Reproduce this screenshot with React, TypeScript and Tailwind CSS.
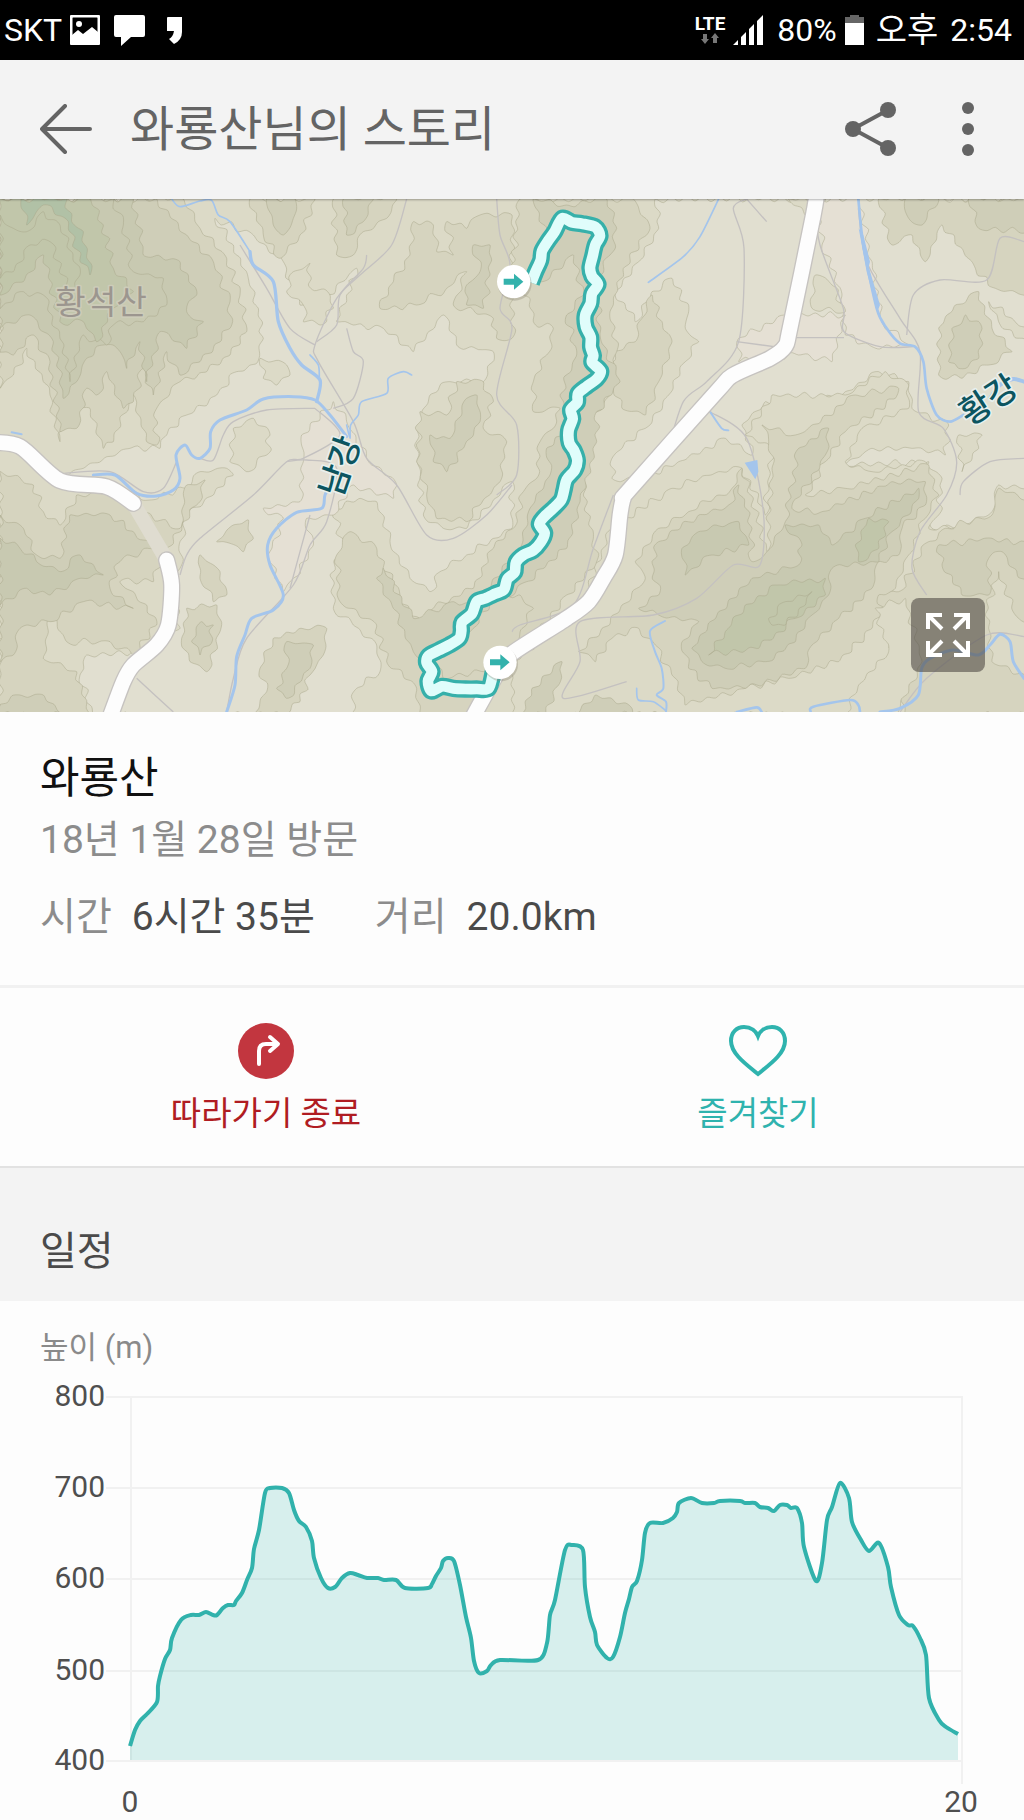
import React from 'react';

type Point = [number, number];

const parse = (s: string): Point[] =>
  s
    .trim()
    .split(/\s+/)
    .map((p) => p.split(',').map(Number) as Point);

/* Catmull-Rom spline through the points. */
function spline(points: Point[], closed = false): string {
  const n = points.length;
  const at = (i: number): Point =>
    closed ? points[(i + n) % n] : points[Math.max(0, Math.min(n - 1, i))];
  let d = `M${points[0][0]},${points[0][1]}`;
  const last = closed ? n : n - 1;
  for (let i = 0; i < last; i++) {
    const [p0, p1, p2, p3] = [at(i - 1), at(i), at(i + 1), at(i + 2)];
    const c = (a: number, b: number, k: number) => (a + (b - k) / 7).toFixed(1);
    d += `C${c(p1[0], p2[0], p0[0])},${c(p1[1], p2[1], p0[1])} ${c(p2[0], p1[0], p3[0])},${c(p2[1], p1[1], p3[1])} ${p2[0]},${p2[1]}`;
  }
  return closed ? d + 'Z' : d;
}

/* Subdivides each edge and pushes the new points sideways, as contour lines run over ridges. */
function ridged(points: Point[], amp: number): Point[] {
  const out: Point[] = [];
  let seed = Math.round(Math.abs(points[0][0] * 31 + points[0][1] * 17)) + 7;
  const rand = () => {
    seed = (seed * 1103515245 + 12345) % 2147483648;
    return seed / 2147483648;
  };
  for (let i = 0; i < points.length; i++) {
    const [ax, ay] = points[i];
    const [bx, by] = points[(i + 1) % points.length];
    const len = Math.hypot(bx - ax, by - ay);
    const steps = Math.max(1, Math.round(len / 24));
    for (let k = 0; k < steps; k++) {
      const t = k / steps;
      const off = k === 0 ? 0 : (k % 2 ? 1 : -1) * amp * (0.2 + rand());
      out.push([
        Math.round(ax + (bx - ax) * t - ((by - ay) / len) * off),
        Math.round(ay + (by - ay) * t + ((bx - ax) / len) * off),
      ]);
    }
  }
  return out;
}

const TONES = {
  low: '#e5e0d4',
  valley: '#e1dfd0',
  base: '#dcdac7',
  hill: '#d6d4bf',
  high: '#cfceb8',
  ridge: '#c8c9b1',
  peak: '#c1c6aa',
  top: '#b1c1a6',
};

type Contour = [keyof typeof TONES, string];

const WEST: Contour[] = [
  ['valley', '645,70 700,150 745,250 775,340 790,430 770,505 710,530 650,600 560,660 500,720 480,760 390,760 250,820 200,850 360,880 450,915 560,880 600,830 680,820 700,840 640,900 560,960 540,1040 540,1120 520,1200 540,1300 500,1340 430,1370 260,1380 240,1440 280,1560 1050,1560 1070,1480 1140,1430 1130,1350 1060,1290 1000,1240 990,1140 1030,1060 1000,940 1080,910 1130,920 1170,1040 1230,1150 1290,1190 1320,1130 1400,1080 1536,1000 1536,860 1500,900 1400,1000 1330,1000 1270,960 1260,850 1250,700 1290,600 1350,560 1450,560 1480,470 1370,450 1330,360 1240,470 1150,400 1060,390 1010,380 1040,300 1070,220 940,340 900,330 880,290 850,200 760,120'],
  ['base', '860,290 880,230 930,205 925,270 990,300 1000,340 960,390 910,380 910,330'],
  ['low', '905,720 1000,620 1040,680 1100,790 1190,870 1180,910 1060,870 1000,960 920,970 940,1050 880,1150 850,1190 805,1080 850,970 790,940 900,920 910,800'],
  ['hill', '0,12 550,12 600,100 680,190 720,300 740,410 690,480 620,530 540,560 470,640 470,750 440,740 400,600 340,740 310,760 270,640 200,650 180,740 150,600 130,560 80,460 40,540 0,580'],
  ['high', '0,12 470,12 560,120 640,200 690,320 690,400 600,500 540,540 500,470 460,600 430,520 400,620 370,640 320,530 290,600 260,580 230,700 180,710 150,500 100,420 40,480 0,470'],
  ['ridge', '0,12 400,12 430,180 540,200 590,300 560,350 610,380 560,460 480,410 440,560 420,440 380,520 360,470 310,450 260,490 230,560 190,610 160,440 90,360 0,400'],
  ['ridge', '0,12 340,12 370,90 400,230 490,250 500,330 430,380 340,390 320,450 250,420 210,560 180,430 130,300 70,290 0,340'],
  ['peak', '0,12 270,12 310,90 340,220 400,290 340,340 290,440 250,380 180,380 130,180 70,260 0,300'],
  ['peak', '0,60 40,100 80,110 130,50 180,90 240,240 220,320 150,140 90,150 40,230 0,250'],
  ['top', '65,12 200,12 215,80 250,110 270,240 240,200 205,80 130,30 80,90'],
  ['hill', '0,830 100,870 130,950 180,990 230,900 330,890 400,940 540,1000 560,870 615,855 590,930 500,1060 460,1160 360,1160 440,1230 470,1290 400,1380 330,1340 200,1340 150,1260 130,1390 230,1430 270,1560 0,1560'],
  ['high', '0,960 70,1000 110,1080 180,1090 210,960 330,960 400,1010 460,1060 360,1100 330,1180 400,1240 250,1220 150,1280 60,1300 40,1380 0,1400'],
  ['ridge', '0,1030 60,1060 110,1100 180,1130 240,1080 310,1140 240,1150 150,1200 80,1180 0,1230'],
  ['high', '0,1530 60,1500 130,1500 190,1560 0,1560'],
  ['base', '700,700 760,670 810,720 800,780 740,830 690,800'],
  ['hill', '650,1040 700,990 745,975 760,1030 730,1070 690,1045'],
  ['base', '780,490 860,510 870,540 830,570 790,550'],
  ['hill', '600,1080 660,1130 680,1200 640,1220 600,1150'],
  ['hill', '560,1240 650,1230 660,1310 620,1430 570,1400 545,1330'],
  ['high', '605,1280 640,1290 630,1350 600,1380 575,1340'],
  ['hill', '820,1330 900,1300 980,1300 970,1380 930,1440 900,1520 850,1560 760,1560 800,1490 780,1420'],
  ['high', '860,1340 940,1350 930,1420 860,1510 830,1480 860,1420'],
  ['hill', '750,12 790,120 840,190 900,120 945,12'],
  ['high', '800,12 820,90 850,120 880,70 885,12'],
  ['hill', '1000,12 1010,180 1060,180 1090,110 1160,70 1190,12'],
  ['high', '1030,12 1040,120 1090,80 1120,12'],
  ['hill', '1240,80 1230,180 1180,260 1140,340 1250,330 1340,280 1400,230 1360,330 1480,370 1490,430 1536,430 1536,60 1440,60 1400,100 1340,80 1360,180 1310,170 1300,90'],
  ['high', '1420,150 1470,150 1470,240 1450,340 1400,330 1400,270 1440,230'],
  ['hill', '1370,560 1450,560 1480,620 1450,700 1520,740 1500,860 1440,930 1400,980 1310,970 1280,900 1250,800 1260,650 1340,660'],
  ['high', '1400,610 1430,600 1440,680 1390,760 1340,830 1300,800 1290,720 1350,730'],
];

const RIDGE: Contour[] = [
  ['hill', '1560,12 1536,240 1590,310 1600,380 1660,400 1640,480 1600,560 1600,650 1680,640 1660,700 1620,740 1610,850 1570,890 1540,1000 1480,1060 1420,1180 1300,1240 1260,1290 1200,1200 1130,1060 1050,1010 1010,1080 1020,1220 1130,1290 1160,1400 1250,1480 1260,1560 1400,1560 1540,1400 1600,1330 1700,1200 1790,1100 1780,1030 1750,900 1760,700 1830,600 1850,470 1830,350 1870,220 1950,100 1900,12'],
  ['high', '1600,12 1700,30 1820,12 1850,100 1830,180 1790,250 1800,420 1860,560 1790,650 1790,740 1740,920 1700,1060 1580,1160 1500,1230 1380,1360 1300,1400 1240,1370 1180,1240 1130,1150 1150,1120 1240,1270 1360,1220 1420,1230 1560,1060 1590,940 1650,840 1640,760 1700,700 1680,600 1730,480 1700,360 1750,300 1720,180 1620,260 1590,220 1640,120'],
  ['hill', '1300,1380 1420,1300 1470,1220 1560,1200 1600,1240 1540,1350 1450,1430 1330,1450'],
];

const EAST: Contour[] = [
  ['valley', '430,12 440,100 380,200 310,290 370,380 420,290 480,250 530,350 520,400 560,440 520,500 470,600 400,700 330,760 300,790 300,850 380,860 500,800 640,730 720,780 690,690 760,620 900,630 1000,590 1100,530 1190,560 1200,640 1310,690 1300,780 1200,760 1080,760 1000,810 1250,800 1260,1000 1350,990 1440,950 1460,870 1550,880 1550,12'],
  ['base', '830,12 940,12 930,60 880,60'],
  ['low', '920,12 1040,12 1080,200 1110,380 1190,450 1080,455 1000,420 990,300 930,150'],
  ['low', '680,430 820,360 1000,360 990,410 960,500 860,480 680,500'],
  ['base', '900,340 1000,350 960,270 910,240'],
  ['base', '780,600 1000,600 1120,530 1190,570 1190,640 1050,700 1000,800 1080,830 1240,800 1290,850 1280,960 1250,1000 1550,1000 1550,1560 0,1560 0,1400 200,1250 300,1000 480,880 620,830 690,820 760,960 780,760 700,720'],
  ['hill', '390,370 420,300 450,380 480,440 440,560 400,660 330,640 290,560 310,470 370,440'],
  ['hill', '750,690 850,720 900,690 1030,600 1160,580 1150,610 1000,710 940,800 880,900 1000,880 1250,810 1280,900 1240,970 1190,1080 1150,1180 1080,1300 980,1400 830,1450 700,1480 520,1530 480,1440 430,1350 380,1300 300,1330 250,1400 200,1370 270,1300 330,1230 400,1150 370,1100 440,1000 530,950 660,880 690,820 765,1070 780,820 770,740'],
  ['high', '860,760 950,700 940,780 840,940 930,950 1140,860 1240,860 1240,930 1170,1000 1160,1080 1100,1100 1080,1180 980,1270 900,1350 880,1420 700,1480 600,1480 530,1420 510,1340 560,1280 440,1260 380,1240 440,1200 420,1100 440,1040 560,960 650,930 680,870 720,1000 720,1100 765,1070 820,980'],
  ['ridge', '820,990 920,990 960,1050 1060,970 1220,880 1220,910 1140,1010 1100,1100 960,1120 950,1200 900,1260 850,1340 760,1400 640,1420 570,1400 540,1360 620,1250 720,1150 860,1110 870,1050'],
  ['ridge', '520,1140 510,1060 560,1010 680,980 710,1050 600,1080'],
  ['peak', '1030,1050 1070,970 1130,980 1100,1060 1040,1100'],
  ['peak', '590,1380 640,1310 700,1230 800,1170 940,1150 940,1200 850,1270 740,1360'],
  ['peak', '780,1290 770,1270 820,1220 900,1190 880,1230 820,1290'],
  ['hill', '1100,12 1140,150 1200,120 1240,200 1290,90 1350,160 1390,220 1450,280 1550,300 1550,12'],
  ['high', '1180,12 1190,70 1230,90 1280,12'],
  ['high', '1370,12 1400,100 1550,110 1550,12'],
  ['hill', '1280,400 1330,330 1400,290 1440,400 1500,470 1430,510 1350,550 1280,540'],
  ['high', '1310,500 1320,400 1360,360 1410,400 1400,490 1340,520'],
  ['base', '1430,320 1500,370 1550,400 1550,450 1460,380'],
  ['base', '1340,720 1410,720 1400,760 1350,830'],
  ['hill', '1250,1040 1300,1000 1440,960 1460,880 1550,920 1550,1560 1180,1560 1150,1400 1100,1200 1160,1190'],
  ['high', '1280,1050 1440,1030 1550,1050 1550,1180 1470,1070 1430,1090 1430,1200 1350,1200 1290,1110'],
  ['base', '1460,1130 1510,1260 1550,1290 1550,1450 1440,1400 1430,1300 1420,1260'],
  ['base', '1090,1240 1180,1210 1230,1400 1150,1560 1000,1560 1040,1470 1130,1370'],
  ['high', '30,1560 60,1480 150,1400 140,1470 100,1560'],
  ['high', '180,1560 250,1500 360,1540 360,1560'],
];

const TRACKS = [
  '1220,12 1175,150 1080,240 1010,310 945,450 955,500 1060,680 1100,790 1190,870 1280,1020 1360,1030 1460,960 1536,870',
  '720,150 800,280 870,400 945,450',
  '1100,180 1090,220 1020,300 1010,390 950,440',
  '1040,400 1060,470 1090,500 1060,610 1000,640',
  '945,640 800,645 700,680 670,720 640,795 600,790',
  '945,640 1020,720 910,790 860,800 760,900 600,1030 560,1080 540,1140',
  '860,800 920,795 1010,820 980,980 930,1050 880,1170 740,1330 700,1450 680,1551',
  '930,960 870,1180',
  '190,835 330,830 430,890 490,880 530,800',
  '410,1450 520,1551',
  '1490,12 1500,120 1530,210 1500,340 1536,400 1490,600 1550,690 1550,840 1490,900',
  '2240,12 2200,40 2232,160 2216,440 2120,560 2050,620 1990,780 1880,860',
  '2210,440 2360,460', '2380,428 2532,428',
  '2440,12 2460,150 2530,340 2532,410 2640,455 2740,455',
  '2575,40 2600,200 2700,370 2760,470 2756,650 2830,700 2870,800 2840,900 2760,1010 2736,1120 2780,1200',
  '2720,420 2740,300 2820,255 2960,255 3000,130 3072,140',
  '2130,650 2240,730 2290,950 2280,1110 2200,1110 2090,1210 1960,1260 1740,1280 1740,1400 1690,1510 1880,1460',
  '2240,12 2300,80', '1840,900 1780,1060 1720,1230 1560,1290 1536,1310',
  '2880,900 2890,860 2970,800 3072,790', '2700,1551 2780,1450 2960,1320 3072,1325',
];

const STREAMS: [number, string][] = [
  [5, '515,12 540,35 600,18 635,16 655,60 690,80 750,170'],
  [10, '750,170 760,210 820,260 835,380 870,460 905,510 960,555 950,620'],
  [5, '930,480 955,510 958,550'],
  [9, '1040,725 990,660 945,615 880,605 790,612 740,645 660,675 632,710 630,760 600,790 575,780 555,750 528,780 540,850 520,885 470,903 410,895 345,840 280,840'],
  [5, '1040,690 1050,730 1052,690 1075,660 1085,620 1160,595 1165,550 1210,530 1235,540'],
  [9, '1000,850 975,900 965,940 890,952 830,1000 803,1050 810,1110 850,1200 820,1245 755,1270 735,1320 710,1385 705,1470 680,1551'],
  [5, '2156,12 2100,125 2050,185 1945,262'],
  [8, '2575,12 2590,150 2630,340 2660,400 2700,445 2745,455 2770,500 2780,580 2810,660 2850,680 2890,660'],
  [12, '3072,560 3040,552 3000,570 2970,610'],
  [6, '2130,650 2165,700 2185,706'],
  [6, '1995,1278 1950,1308 1965,1370 1985,1420 1990,1480 1970,1500 1998,1520 1998,1551'],
  [5, '1910,1480 1915,1515 1960,1520 1995,1545'],
  [9, '2640,1551 2700,1540 2755,1500 2765,1420 2790,1390 2860,1365 2935,1380 2970,1350 3000,1318 3030,1340 3040,1400 3072,1450'],
  [8, '2432,1551 2440,1535 2550,1515 2575,1530 2580,1551'],
  [8, '2210,1551 2270,1537 2285,1551'],
  [6, '35,712 65,718'],
];

const ROADS = [
  '-30,742 60,755 180,857 320,875 400,925',
  '500,1095 515,1170 505,1290 470,1350 400,1410 370,1460 325,1580',
  '2452,-20 2440,60 2370,400 2355,455 2310,490 2200,540 2150,590 1890,882 1870,910 1860,960 1846,1080 1810,1150 1766,1220 1700,1270 1536,1375 1500,1420 1400,1600',
];

const HIKE = spline(
  parse(
    '1594,263 1606,232 1622,196 1626,168 1644,138 1664,110 1686,70 1716,82 1746,86 1786,96 1800,122 1786,150 1778,184 1770,218 1776,244 1794,268 1776,296 1772,326 1756,360 1758,396 1772,426 1772,456 1780,482 1776,502 1802,528 1790,552 1760,574 1734,596 1732,622 1712,644 1718,672 1706,706 1708,744 1722,766 1732,796 1724,826 1700,854 1692,886 1684,914 1660,940 1630,968 1618,988 1634,1014 1622,1042 1600,1066 1570,1080 1548,1102 1544,1132 1522,1152 1512,1184 1486,1196 1456,1210 1430,1220 1416,1256 1386,1282 1384,1308 1378,1330 1348,1350 1316,1366 1286,1382 1280,1404 1296,1430 1284,1458 1294,1488 1326,1474 1360,1480 1396,1482 1430,1482 1466,1480 1480,1430',
  ),
);

const Contours = ({ items, dx = 0 }: { items: Contour[]; dx?: number }) => (
  <g transform={`translate(${dx} 0)`} stroke="#a9a88c" strokeOpacity="0.5" strokeWidth="3">
    {items.map(([tone, pts], i) => (
      <path key={i} d={spline(ridged(parse(pts), 9), true)} fill={TONES[tone]} />
    ))}
  </g>
);

const Marker = ({ x, y }: { x: number; y: number }) => (
  <g transform={`translate(${x} ${y})`}>
    <circle cx="3" cy="6" r="51" fill="#8b8878" fillOpacity="0.35" />
    <circle r="50" fill="#fff" />
    <path d="M-30,-9H1V-24L29,0L1,24V9H-30Z" fill="#33b2ac" />
  </g>
);

const TrailMap = () => (
  <svg
    viewBox="0 12 3072 1539"
    preserveAspectRatio="xMidYMid slice"
    className="block h-full w-full"
    role="img"
    aria-label="와룡산 등산 경로 지도"
  >
    <rect y="0" width="3072" height="1560" fill={TONES.base} />
    <Contours items={WEST} />
    <Contours items={EAST} dx={1536} />
    <Contours items={RIDGE} />
    <g fill="none" stroke="#c4c1c0" strokeWidth="4" strokeLinejoin="round">
      {TRACKS.map((t) => (
        <path key={t} d={spline(parse(t))} />
      ))}
    </g>
    <g fill="none" stroke="#a4c5ec" strokeLinejoin="round" strokeLinecap="round">
      {STREAMS.map(([w, s]) => (
        <path key={s} d={spline(parse(s))} strokeWidth={w} />
      ))}
    </g>
    <path d="M2576,100L2590,120L2610,200L2606,215L2640,330L2632,350L2600,230Z" fill="#a4c5ec" />
    <path d="M2234,803L2272,795L2275,830L2266,853Z" fill="#a4c5ec" />
    <path d="M400,925L500,1095" stroke="#dfdcd0" strokeWidth="44" />
    {['#c6c3c0', '#fdfdfd'].map((c, i) => (
      <g key={c} fill="none" stroke={c} strokeWidth={i ? 44 : 52} strokeLinecap="round" strokeLinejoin="round">
        {ROADS.map((r) => (
          <path key={r} d={spline(parse(r))} />
        ))}
      </g>
    ))}
    <path d={HIKE} fill="none" stroke="#36b0aa" strokeWidth="52" strokeLinejoin="round" />
    <path d={HIKE} fill="none" stroke="#e0fdfb" strokeWidth="32" strokeLinejoin="round" />
    <Marker x={1541} y={260} />
    <Marker x={1500} y={1402} />
    <g
      fontSize="100"
      textAnchor="middle"
      strokeLinejoin="round"
      strokeWidth="10"
      className="[font-family:'Noto_Sans_CJK_KR',sans-serif] [paint-order:stroke]"
    >
      <text x="303" y="358" fill="#9c968f" stroke="#cdccb9">
        황석산
      </text>
      <g fill="#0c5560" stroke="#e8f0ee" className="font-medium">
        <text transform="translate(1020 814) rotate(-71)" y="35">
          남강
        </text>
        <text transform="translate(2966 615) rotate(-33)" y="35">
          황강
        </text>
      </g>
    </g>
  </svg>
);

/* Altitude profile in chart coordinates. */
const PROFILE = parse(
  '130,1746 135,1730 140,1721 147,1714 157,1702 158,1686 160,1676 165,1659 170,1650 172,1638 181,1620 191,1615 199,1615 206,1612 213,1615 217,1615 223,1608 228,1605 234,1605 236,1601 242,1593 247,1580 252,1568 254,1549 259,1530 265,1493 270,1488 282,1488 289,1493 294,1510 299,1521 306,1527 312,1541 314,1558 321,1578 328,1588 335,1587 342,1578 350,1573 358,1575 367,1578 378,1578 384,1580 396,1580 405,1588 428,1588 432,1584 436,1576 441,1568 443,1561 448,1558 454,1561 460,1585 466,1617 471,1638 474,1661 479,1673 487,1671 491,1665 500,1660 538,1660 547,1643 550,1615 555,1600 565,1550 572,1545 583,1550 585,1587 590,1617 595,1632 597,1645 607,1658 613,1657 620,1637 625,1613 629,1599 632,1587 637,1581 642,1560 645,1533 650,1523 663,1523 673,1518 677,1512 679,1503 691,1498 702,1503 714,1503 720,1501 740,1501 745,1503 755,1503 760,1507 768,1508 774,1511 780,1505 787,1505 791,1508 797,1508 802,1523 804,1547 816,1581 822,1563 827,1520 832,1507 840,1483 849,1498 852,1522 861,1540 869,1551 879,1543 888,1567 891,1587 899,1615 908,1625 913,1626 920,1638 926,1655 929,1698 939,1720 946,1727 958,1734',
);
const PROFILE_LINE = spline(PROFILE);
const LEVELS = [
  [800, 1397],
  [700, 1488],
  [600, 1579],
  [500, 1671],
  [400, 1761],
];

const AltitudeChart = () => (
  <svg viewBox="0 1375 1024 442" className="block w-full" role="img" aria-label="높이 그래프">
    <g fill="#f1f1f1">
      {LEVELS.map(([v, y]) => (
        <rect key={v} x="106" y={y - 1} width="857" height="2" />
      ))}
      <rect x="130" y="1396" width="2" height="366" />
      <rect x="961" y="1396" width="2" height="388" />
    </g>
    <path d={`${PROFILE_LINE}L958,1760L130,1760Z`} fill="#2fb0a9" fillOpacity="0.18" />
    <path d={PROFILE_LINE} fill="none" stroke="#31b2ac" strokeWidth="4" strokeLinejoin="round" />
    <g fill="#4f4f4f" fontSize="30">
      {LEVELS.map(([v, y]) => (
        <text key={v} x="105" y={y + 9} textAnchor="end">
          {v}
        </text>
      ))}
      <text x="130" y="1812" textAnchor="middle">0</text>
      <text x="961" y="1812" textAnchor="middle">20</text>
    </g>
  </svg>
);

const StatusBar = () => (
  <div className="flex h-[60px] items-center justify-between bg-black pr-3 pl-1 text-[32px] leading-none text-white">
    <div className="flex items-center">
      <span className="w-[66px]">SKT</span>
      <svg width="30" height="30" viewBox="0 0 30 30" aria-hidden="true">
        <rect x="1" y="1" width="28" height="28" rx="2" fill="none" stroke="#fff" strokeWidth="3" />
        <circle cx="9" cy="9" r="3" fill="#fff" />
        <path d="M2,20L8,15L13,19L22,12L28,17V28H2Z" fill="#fff" />
      </svg>
      <svg className="ml-[14px]" width="31" height="32" viewBox="0 0 31 32" aria-hidden="true">
        <path d="M2,1H29Q31,1 31,3V21Q31,23 29,23H17L7,32V23H2Q0,23 0,21V3Q0,1 2,1Z" fill="#fff" />
      </svg>
      <svg className="ml-[22px]" width="15" height="30" viewBox="0 0 15 30" aria-hidden="true">
        <path d="M1,2H15V17Q15,25 7,29L2,24Q6,22 7,16H0V3Q0,2 1,2Z" fill="#fff" />
      </svg>
    </div>
    <div className="flex items-center">
      <div className="flex flex-col items-center">
        <span className="text-[19px] leading-[18px] font-bold">LTE</span>
        <svg width="18" height="12" viewBox="0 0 18 12" fill="#777" aria-hidden="true">
          <path d="M2,1H6V6H8L4,11L0,6H2Z" />
          <path d="M12,10H16V5H18L14,0L10,5H12Z" />
        </svg>
      </div>
      <svg className="ml-2" width="30" height="30" viewBox="0 0 30 30" fill="#fff" aria-hidden="true">
        <path d="M0,30L5,25V30ZM8,30V22L13,17V30ZM16,30V14L21,9V30ZM24,30V6L30,0V30Z" />
      </svg>
      <span className="ml-[14px]">80%</span>
      <svg className="ml-2" width="19" height="30" viewBox="0 0 19 30" aria-hidden="true">
        <path d="M5,0H14V2H19V8H0V2H5Z" fill="#666" />
        <rect y="8" width="19" height="22" fill="#fff" />
      </svg>
      <span className="ml-3 text-[34px]">오후</span>
      <span className="ml-3">2:54</span>
    </div>
  </div>
);

const AppBar = () => (
  <header className="relative z-10 flex h-[139px] items-center bg-[#f3f3f3] pr-9 pb-0.5 pl-10 text-[#646464] shadow-[0_1px_2px_rgba(0,0,0,0.3)]">
    <button type="button" aria-label="뒤로">
      <svg width="52" height="50" viewBox="0 0 52 50" fill="none" stroke="currentColor" strokeWidth="4" strokeLinecap="round" strokeLinejoin="round">
        <path d="M25,2L2,25L25,48M2,25H50" />
      </svg>
    </button>
    <h1 className="ml-[38px] flex-1 pt-0.5 text-[48px] leading-[60px]">와룡산님의 스토리</h1>
    <button type="button" aria-label="공유">
      <svg width="52" height="54" viewBox="0 0 52 54" fill="currentColor">
        <path d="M8,27L43,8M8,27L43,46" stroke="currentColor" strokeWidth="4" />
        <circle cx="8" cy="27" r="8" />
        <circle cx="43" cy="8" r="8" />
        <circle cx="43" cy="46" r="8" />
      </svg>
    </button>
    <button type="button" aria-label="더보기" className="ml-[51px] w-10">
      <svg className="mx-auto" width="12" height="54" viewBox="0 0 12 54" fill="currentColor">
        <circle cx="6" cy="6" r="6" />
        <circle cx="6" cy="27" r="6" />
        <circle cx="6" cy="48" r="6" />
      </svg>
    </button>
  </header>
);

export default function App() {
  return (
    <div className="min-h-screen bg-[#fdfdfd] [font-family:Roboto,'Noto_Sans_CJK_KR',sans-serif]">
      <StatusBar />
      <AppBar />

      <section className="relative h-[513px] overflow-hidden">
        <TrailMap />
        <button
          type="button"
          aria-label="지도 크게 보기"
          className="absolute right-[39px] bottom-10 flex h-[74px] w-[74px] items-center justify-center rounded-lg bg-[#504b46]/60"
        >
          <svg width="44" height="44" viewBox="0 0 44 44" fill="none" stroke="#fff" strokeWidth="4">
            <path d="M2,16V2H16M2,2L16,16M28,2H42V16M42,2L28,16M2,28V42H16M2,42L16,28M42,28V42H28M42,42L28,28" />
          </svg>
        </button>
      </section>

      <section className="border-b-3 border-[#f1f1f1] px-10 pt-9 pb-10">
        <h2 className="text-[43px] leading-[60px] text-[#111]">와룡산</h2>
        <p className="mt-1 text-[39px] leading-[56px] text-[#8c8c8c]">18년 1월 28일 방문</p>
        <dl className="mt-[21px] flex text-[39px] leading-[56px] text-[#4a4a4a]">
          <dt className="text-[#8c8c8c]">시간</dt>
          <dd className="ml-5">6시간 35분</dd>
          <dt className="ml-[60px] text-[#8c8c8c]">거리</dt>
          <dd className="ml-5">20.0km</dd>
        </dl>
      </section>

      <section className="grid grid-cols-2 px-5 pt-[34px] pb-7 text-[33px] leading-[48px]">
        <button type="button" className="flex flex-col items-center text-[#b01c22]">
          <svg width="58" height="58" viewBox="0 0 58 58">
            <circle cx="29" cy="29" r="28" fill="#c2363f" />
            <path d="M22,42V29Q22,22 29,22H40M33,15L41,22L33,29" fill="none" stroke="#fff" strokeWidth="4" strokeLinecap="round" strokeLinejoin="round" />
          </svg>
          <span className="mt-[10px]">따라가기 종료</span>
        </button>
        <button type="button" className="flex flex-col items-center text-[#2fb3ae]">
          <svg width="58" height="58" viewBox="0 0 58 58" fill="none" stroke="currentColor" strokeWidth="4">
            <path d="M29,52C18,43 2,32 2,19C2,10 8,5 15,5C22,5 27,9 29,14C31,9 36,5 43,5C50,5 56,10 56,19C56,32 40,43 29,52Z" />
          </svg>
          <span className="mt-[10px]">즐겨찾기</span>
        </button>
      </section>

      <h2 className="border-t-2 border-[#e2e2e2] bg-[#f3f3f3] px-10 pt-14 pb-[21px] text-[40px] leading-[56px] text-[#4a4a4a]">
        일정
      </h2>

      <section>
        <p className="px-10 pt-[25px] text-[31px] leading-[44px] text-[#8a8a8a]">높이 (m)</p>
        <div className="pt-[5px]">
          <AltitudeChart />
        </div>
      </section>
    </div>
  );
}
